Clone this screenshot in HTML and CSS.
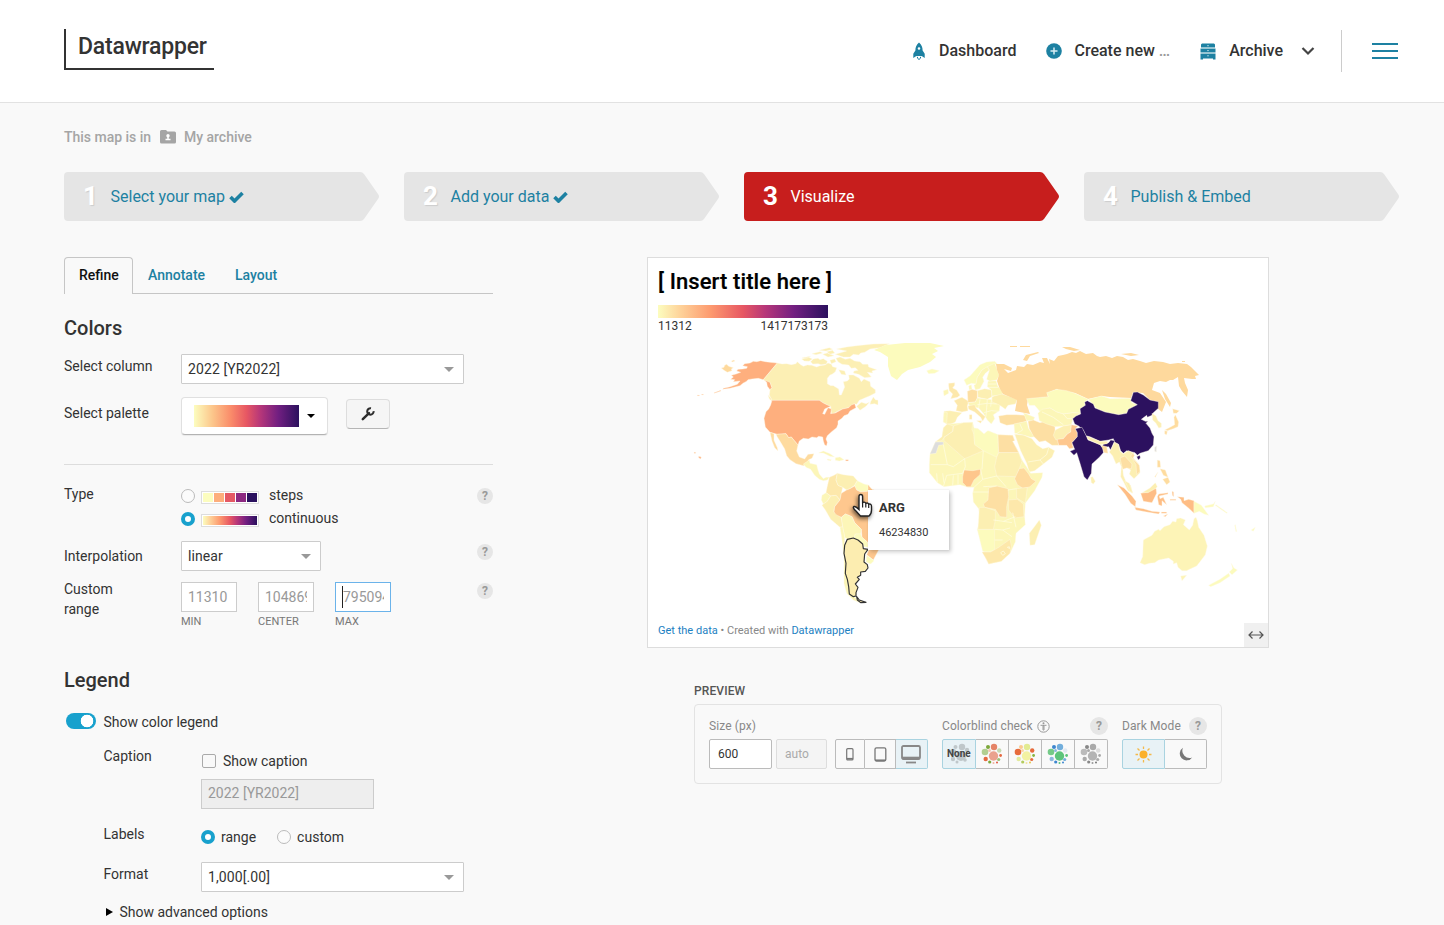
FILE: index.html
```html
<!DOCTYPE html>
<html lang="en">
<head>
<meta charset="utf-8">
<title>Datawrapper</title>
<link rel="stylesheet" href="styles.css">
</head>
<body>
<header class="topbar">
  <div class="logo">Datawrapper</div>
  <nav class="nav">
    <a class="nav-item dash"><svg width="14" height="20" viewBox="0 0 14 20"><path fill="#1d81a2" fill-rule="evenodd" d="M7 1.500C4.400 3.700 3.300 6.500 3.400 9.500L1.300 12.800V17L4.300 15H9.700L12.700 17V12.800L10.600 9.500C10.700 6.500 9.600 3.700 7 1.500ZM7 6.200a1.300 1.300 0 1 1 0 2.600a1.300 1.300 0 0 1 0-2.600Z"/><path d="M5.300 15.800Q5.300 17.800 7 18.500Q8.700 17.800 8.700 15.800" fill="none" stroke="#1d81a2"/></svg>Dashboard</a>
    <a class="nav-item create"><svg width="16" height="16" viewBox="0 0 16 16"><circle cx="8" cy="8" r="7.800" fill="#1d81a2"/><path d="M4.500 8h7M8 4.500v7" stroke="#d7edf4" stroke-width="1.500"/></svg><span>Create new <span class="dots">…</span></span></a>
    <a class="nav-item archive"><svg width="16" height="17" viewBox="0 0 16 17"><path fill="#1d81a2" d="M2 .6h12l1 1V4.600H1V1.600zM.5 5.600h15v4H.5zM.5 10.600h15v5.800H13v-.9H3v.9H.5z"/><path d="M1 5.100h14M1 10.100h14" stroke="#a5ced9" stroke-width=".8"/><path d="M7.300 2.700h1.400M7.300 7.600h1.400M7.300 12.800h1.400" stroke="#cde5ec"/></svg>Archive<svg class="chev" width="14" height="10" viewBox="0 0 14 10"><path d="M1.500 2L7 7.500L12.500 2" fill="none" stroke="#444" stroke-width="2.200"/></svg></a>
    <span class="nav-rule"></span>
    <span class="burger"><i></i><i></i><i></i></span>
  </nav>
</header>
<main class="page">
  <div class="crumb"><span>This map is in</span><svg width="16" height="14" viewBox="0 0 16 14"><path fill="#a5a5a5" d="M1.500 0H6l1.500 1.500h7Q16 1.500 16 3v9q0 1.500-1.500 1.500h-13Q0 13.500 0 12V1.500Q0 0 1.500 0Z"/><circle cx="8" cy="5.700" r="1.700" fill="#fff"/><path d="M8 6v3M5.500 9.500h5" stroke="#fff" stroke-width="1.500"/></svg><span>My archive</span></div>

  <div class="steps">
    <div class="step"><svg class="shape" viewBox="0 0 315 49"><path d="M4 0H296Q298.500 0 300 2L314 22Q316 24.500 314 27L300 47Q298.500 49 296 49H4Q0 49 0 45V4Q0 0 4 0Z"/></svg><b>1</b><span>Select your map</span><svg class="tick" viewBox="0 0 15 12"><path d="M1.500 6L5.500 10L13.500 2" /></svg></div>
    <div class="step"><svg class="shape" viewBox="0 0 315 49"><path d="M4 0H296Q298.500 0 300 2L314 22Q316 24.500 314 27L300 47Q298.500 49 296 49H4Q0 49 0 45V4Q0 0 4 0Z"/></svg><b>2</b><span>Add your data</span><svg class="tick" viewBox="0 0 15 12"><path d="M1.500 6L5.500 10L13.500 2" /></svg></div>
    <div class="step on"><svg class="shape" viewBox="0 0 315 49"><path d="M4 0H296Q298.500 0 300 2L314 22Q316 24.500 314 27L300 47Q298.500 49 296 49H4Q0 49 0 45V4Q0 0 4 0Z"/></svg><b>3</b><span>Visualize</span></div>
    <div class="step"><svg class="shape" viewBox="0 0 315 49"><path d="M4 0H296Q298.500 0 300 2L314 22Q316 24.500 314 27L300 47Q298.500 49 296 49H4Q0 49 0 45V4Q0 0 4 0Z"/></svg><b>4</b><span>Publish &amp; Embed</span></div>
  </div>

  <div class="columns">
    <section class="panel">
      <div class="tabs"><a class="tab active">Refine</a><a class="tab">Annotate</a><a class="tab last">Layout</a></div>
      <h3 class="h-colors">Colors</h3>
      <div class="row r-column"><label>Select column</label><div class="select w283">2022 [YR2022]<i class="caret"></i></div></div>
      <div class="row r-palette"><label>Select palette</label><div class="palette"><span class="magma"></span><i class="caret dark"></i></div>
        <div class="wrench"><svg width="14" height="14" viewBox="0 0 14 14"><path d="M1.800 12.200L8 6.200" stroke="#2d2d2d" stroke-width="2.500" stroke-linecap="round"/><path d="M12.600 4.200A3.200 3.200 0 1 1 10 1.300" fill="none" stroke="#2d2d2d" stroke-width="2"/></svg></div></div>
      <div class="row r-type"><label>Type</label>
        <div class="types">
          <div class="type"><i class="radio"></i><span class="swatch"><i class="c1"></i><i class="c2"></i><i class="c3"></i><i class="c4"></i><i class="c5"></i></span><span class="txt">steps</span></div>
          <div class="type"><i class="radio on"></i><span class="swatch"><i class="magma2"></i></span><span class="txt">continuous</span></div>
        </div><span class="help">?</span></div>
      <div class="row r-interp"><label>Interpolation</label><div class="select w140">linear<i class="caret"></i></div><span class="help">?</span></div>
      <div class="row r-range"><label>Custom<br>range</label>
        <div class="ranges"><div><div class="num"><span>11310</span></div><small>MIN</small></div><div><div class="num"><span>104869</span></div><small>CENTER</small></div><div><div class="num focus"><span>795094</span></div><small>MAX</small></div></div><span class="help">?</span></div>
      <h3 class="h-legend">Legend</h3>
      <div class="toggle-row"><i class="toggle"></i>Show color legend</div>
      <div class="sub">
        <div class="row r-caption"><label>Caption</label><div><div class="check"><i class="box"></i>Show caption</div><div class="field">2022 [YR2022]</div></div></div>
        <div class="row r-labels"><label>Labels</label><div class="opts"><i class="radio on"></i><span>range</span><i class="radio second"></i><span>custom</span></div></div>
        <div class="row r-format"><label>Format</label><div class="select w263">1,000[.00]<i class="caret"></i></div></div>
        <div class="advanced"><i></i>Show advanced options</div>
      </div>
    </section>

    <section class="stage">
      <div class="chart">
        <h1>[ Insert title here ]</h1>
        <div class="legend"><div class="magma2"></div><div class="ends"><span>11312</span><span>1417173173</span></div></div>
        <svg class="map" viewBox="648 334 620 284" width="620" height="284">
          <!-- North America -->
          <g class="land" transform="translate(690 335) scale(.33333)">
            <path class="us" d="M262 84L240 82 226 80 212 77 200 80 190 79 180 84 164 86 158 92 172 95 170 100 158 102 144 103 140 108 152 112 138 117 124 121 130 126 122 133 134 134 130 140 150 138 142 148 118 156 100 160 98 163 120 160 150 152 160 144 168 140 174 134 186 132 205 130 220 134ZM222 134L230 136 240 140 246 158 240 164 232 154 230 142ZM72 173l20-7 1 2-20 7ZM22 180h6v2h-6ZM35 178h5v2h-5Z"/>
            <path class="ru" d="M94 99L102 97 104 91 110 88 116 94 130 98 124 102 126 107 112 112 102 106ZM124 78l8-3 3 3-8 3Z"/>
            <path class="ca" d="M262 84L276 87 290 86 304 89 318 86 322 80 330 88 340 94 352 90 365 91 380 96 390 92 405 90 414 84 424 88 428 95 440 98 436 110 426 118 420 120 412 130 412 146 422 152 430 152 446 162 448 180 454 180 460 166 464 156 460 140 472 138 478 132 476 120 490 120 508 130 514 140 522 132 534 138 540 140 542 154 556 164 556 174 540 182 522 190 508 196 500 208 494 206 488 210 476 218 458 222 440 230 428 238 424 236 422 214 412 210 400 204 388 196 246 196 238 180 240 164 246 158 240 142 220 134Z"/>
            <path class="ca" d="M542 200l8-14 6 8 8 2v14l-10-4-14 2ZM500 214l14-12 14 4 10-4-10 12-18 12ZM234 180l8 8 6 12-10-8ZM335 72l20-6 12 6-10 7-14-1ZM362 80l8-8 14-2 6 4 10-3 12 8-3 8-16 2-8-3-17 1ZM398 58l14-4 20 8-18 4ZM420 76l14-4 4 8-14 6ZM438 70l12-4 16 7 14-3 14 8 16 2 8 8 16 0 2 8 24 8-14 4 2 6-16-2 12 14-20 2-18-10-16-4 2-6 12-2-8-8-12 2-8-10-20-2-12-8ZM336 68l26-4-12 6ZM366 56l24-6 8 4-20 5ZM388 46l30-8 10 5-20 5ZM436 58L470 48 440 42 470 36 500 32 550 27 598 26 570 38 540 42 524 52 512 54 506 60 490 58 480 66 460 66ZM446 104l18 4 4 12-14-2ZM410 50l18-4 6 8-14 4Z"/>
            <path class="us" d="M246 196H388L400 204 412 210 422 214 404 222 398 236 404 238 414 218 424 222 422 236 436 234 458 222 476 218 484 210 494 206 498 218 480 228 474 238 462 242 456 250 444 258 444 268 440 278 425 290 412 302 408 312 412 322 410 332 404 330 400 318 398 306 386 304 380 308 366 306 355 312 340 310 328 318 324 330 312 316 304 306 296 308 288 296 262 298 240 292 226 276 222 250 228 230 236 222 242 210ZM26 364l8 2-2 6-6-4ZM12 352h5v3h-5ZM467 374h8v4h-8Z"/>
            <path class="mx" d="M258 298L288 296 296 308 304 306 312 316 324 330 320 348 328 366 344 372 354 358 372 356 366 370 356 374 350 388 340 392 318 386 300 374 290 362 284 342 272 322 262 306ZM240 292L252 296 252 316 262 338 264 348 254 338 246 318Z"/>
            <path class="l2" d="M386 354L400 348 420 356 434 366 420 364 400 354ZM436 368l14-2 12 8-14 4-12-2ZM412 372l12 2-2 3-10-2Z"/>
          </g>
          <path class="l1" d="M874 350L886 345 905 343 930 343 944 346 934 348 938 351 932 354 936 357 930 362 920 367 908 370 902 374 897 380 891 376 888 366 888 357 880 352Z"/>
          <!-- South America -->
          <g class="land" transform="translate(740 430) scale(.33333)">
            <path class="l2" d="M190 102L208 90 210 100 230 104 234 120 238 132 250 146 258 142 268 142 262 150 250 152 238 148 224 136 212 118 198 112Z"/>
            <path class="l4" d="M268 142L282 136 292 130 288 150 294 166 308 172 304 190 300 210 288 196 272 198 258 188 262 168Z"/>
            <path class="l3" d="M292 130L310 134 340 138 352 152 344 166 330 176 320 180 308 172 294 166 288 150Z"/>
            <path class="l1" d="M352 152L372 162 388 166 384 184 362 186 348 178 344 166Z"/>
            <path class="l2" d="M246 196L258 188 272 198 262 214 250 222 244 210Z"/>
            <path class="l3" d="M250 222L262 214 272 198 288 196 300 210 284 230 282 246 304 262 308 290 300 292 272 268 256 240 246 226Z"/>
            <path class="br" d="M300 210L304 190 320 180 330 176 344 168 350 180 362 186 384 184 384 164 396 178 420 186 440 200 450 230 440 300 418 356 400 390 380 374 388 356 382 336 366 322 364 298 344 278 336 260 316 252 304 262 288 254 282 246 284 230Z"/>
            <path class="l2" d="M304 262L316 252 336 260 344 278 364 298 362 312 346 312 342 324 322 328 314 322 308 290Z"/>
            <path class="l1" d="M346 312L362 312 366 322 382 336 386 352 372 350 368 340 342 326ZM380 376L402 392 392 402 378 396Z"/>
            <path class="l2" d="M300 292L308 290 314 322 314 360 318 400 322 450 328 484 344 500 360 518 340 510 320 490 312 460 312 380 306 330Z"/>
            <path class="arg" d="M322 328L340 324 354 330 368 342 370 356 384 358 374 372 372 396 382 404 384 414 376 424 362 426 362 436 352 442 358 448 346 462 354 472 348 488 348 498 340 500 328 492 326 470 322 448 316 430 318 400 312 370 314 346ZM350 500L358 510 378 517 362 518 352 510Z"/>
          </g>
          <!-- Europe and Africa -->
          <g class="land" transform="translate(900 320) scale(.33333)">
            <path class="l1" d="M80 152L96 147 118 152 104 160 86 161ZM192 180L210 168 226 150 240 134 260 126 284 124 292 132 270 138 246 150 232 172 228 192 214 190 200 196Z"/>
            <path class="l2" d="M228 192L232 172 246 150 262 140 268 150 256 160 248 172 252 184 240 206 226 210 222 196ZM262 140L284 130 292 150 298 166 290 180 270 184 260 178 264 164 268 152ZM206 198l8-4 2 14-8 2ZM130 212L144 208 146 220 132 228Z"/>
            <path class="l4" d="M146 190L164 188 164 196 158 204 170 210 180 226 172 232 152 236 158 222 148 212 146 198ZM162 242L180 234 186 232 206 244 202 258 204 272 186 276 168 272 172 256Z"/>
            <path class="l3" d="M132 274L150 272 186 278 172 292 166 306 150 314 140 312 130 306Z"/>
            <path class="l2" d="M132 276L142 278 140 310 130 306Z"/>
            <path class="l5" d="M202 214L216 208 232 212 232 234 226 246 204 248Z"/>
            <path class="l3" d="M232 212L254 206 274 210 276 230 262 238 234 232Z"/>
            <path class="l2" d="M204 248L226 246 232 234 262 238 290 240 300 256 298 272 280 284 284 296 274 312 262 300 250 280 236 264 210 260Z"/>
            <path class="l4" d="M204 258L224 254 228 264 244 280 256 290 248 304 242 292 224 276 206 268ZM230 302h16l-4 8ZM208 284h8v14h-8Z"/>
            <path class="l2" d="M264 184L288 182 294 200 310 214 306 226 276 228 274 210 262 200Z"/>
            <path class="l3" d="M276 230L306 222 330 230 352 238 346 252 324 256 316 268 306 260 296 254 276 246Z"/>
            <path class="rule" d="M232 254L262 250 290 252M240 238L236 264M262 238L258 290M276 228L272 260M264 192H290M264 202H294M252 278L274 272 298 274"/>
            <path class="l5" d="M296 288L320 284 350 284 376 286 380 304 350 312 320 316 300 308Z"/>
            <path class="l2" d="M370 278L404 292 400 302 380 302ZM342 312L380 304 386 326 404 350 392 352 372 346 344 340Z"/>
            <path class="l5" d="M384 304L400 300 420 308 440 302 464 312 466 340 474 358 476 376 456 376 436 362 418 366 400 348 388 326Z"/>
            <path class="l3" d="M344 342L372 346 396 356 410 374 428 386 446 382 464 392 456 412 430 432 404 452 388 456 380 430 362 392Z"/>
            <path class="rule" d="M384 426L420 420 440 404 446 384M360 312L368 330 344 344M420 420L430 432"/>
            <path class="l2" d="M142 312L190 308 218 306 222 324 234 326 252 342 264 332 294 344 338 346 344 360 336 362 352 388 366 420 382 444 392 460 428 458 426 472 404 512 376 550 374 590 376 614 348 640 346 666 330 700 304 724 266 732 258 716 246 680 232 628 240 600 236 566 220 546 218 520 222 502 204 502 180 494 132 500 112 488 88 458 88 432 90 402 106 366 126 352 130 324Z"/>
            <path class="l3" d="M142 312L160 318 158 334 132 352 126 362 106 366 126 350 130 324ZM160 318L190 308 218 308 216 328 222 344 224 372 250 392 194 416 132 362 132 352 158 334Z"/>
            <path class="l1" d="M222 324L234 326 252 342 264 332 294 344 296 398 290 412 250 392 224 374 222 344ZM232 628H284V690L266 696 248 694Z"/>
            <path class="l5" d="M294 344L338 346 344 362 338 364 356 398H296Z"/>
            <path class="l3" d="M296 398H356L366 424 356 452 350 470 290 468 284 440 290 412Z"/>
            <path class="et" d="M344 476L358 446 372 444 386 462 394 476 408 484 390 500 370 506 352 494Z"/>
            <path class="ng" d="M188 470L192 450 218 452 242 448 240 464 222 480 212 500 200 500 188 488Z"/>
            <path class="l5" d="M266 504L290 498 324 506 326 530 320 560 320 592 300 590 286 568 254 562 250 552 264 540Z"/>
            <path class="l4" d="M326 540L352 538 370 552 372 590 344 594 326 570ZM246 696L272 696 296 682 330 658 334 678 330 700 304 724 266 732 258 716Z"/>
            <path class="l3" d="M350 506L382 502 376 550 350 534ZM238 562L254 562 286 572 286 600 280 628H234ZM388 640L402 622 418 600 424 616 404 674 390 676Z"/>
            <path class="wsa" d="M90 402L106 366 130 366 130 374 116 376 108 400Z"/>
            <path class="rule" d="M130 374L142 434 92 434M142 434L160 440 194 416 196 440 188 460 140 466 130 500M250 392L246 448M110 460L112 488M128 460L132 488M160 466L158 496M174 464V494M242 448L248 478 222 502M248 478L290 468M250 500L290 498M218 516H266M280 600L310 604 346 590M310 604L336 608M284 628L308 630 330 624M308 630L336 650M284 660L308 660M324 510L350 506M338 578L348 622M290 468L318 500M302 698l8-5 6 8-8 5ZM322 682l6-2 1 6Z"/>
          </g>
          <!-- Asia and Oceania -->
          <path class="ru" d="M996 364L1004 364 1012 368 1011 371 1004 369 1008 373 1016 370 1017 366 1024 367 1027 364 1033 365 1040 362 1044 363 1042 358 1047 358 1050 364 1049 359 1054 361 1058 356 1063 355 1067 354 1072 352 1076 353 1080 351 1086 354 1093 353 1097 356 1100 357 1106 356 1112 358 1117 356 1123 357 1128 360 1133 359 1140 361 1146 363 1154 361 1163 362 1170 364 1178 363 1187 364 1191 367 1195 371 1199 375 1195 376 1196 379 1192 379 1184 378 1185 383 1188 390 1187 397 1182 391 1179 386 1178 377 1173 380 1170 380 1166 382 1160 381 1154 383 1152 390 1160 393 1166 402 1162 412 1157 408 1158 402 1150 400 1143 393 1133 392 1131 398 1110 397 1102 396 1088 399 1075 393 1060 391 1057 389 1047 393 1048 397 1028 399 1027 405 1030 414 1015 411 1017 400 1003 394 999 387 997 381 999 375 997 370ZM1023 360L1026 355 1038 352 1039 353 1030 356 1027 361ZM1062 347h8l10 3-6 1-8-2ZM1121 354l10-1 8 2-8 1ZM1010 346h7v1h-7ZM1020 346h10v1h-10ZM1182 361h3v1h-3ZM1162 390L1166 394 1171 403 1170 407 1165 399Z"/>
          <g class="land" transform="translate(1060 330) scale(.33333)">
            <path class="l1" d="M-100 206L-35 200-40 188-10 178 20 182 45 190 85 208 74 216 76 226 60 236 62 250 40 248 10 252-10 246-30 234-46 240-54 250-64 240-76 226-92 226Z"/>
            <path class="l2" d="M-66 250L-54 238-30 234-10 246 10 252 40 248 62 250 48 258 38 268 34 284 10 288-14 290-40 282-62 272Z"/>
            <path class="rule" d="M-54 246L-20 262 10 284M10 252L22 266 40 266"/>
            <path class="l3" d="M-14 300L10 288 34 284 32 306 22 312 10 326-12 330-20 316Z"/>
            <path class="br" d="M34 284L54 288 46 296 52 308 52 320 36 338 40 354 28 356 20 346-4 346-8 328 10 326 22 312 32 306Z"/>
            <path class="l1" d="M85 208L125 198 150 206 212 205 215 218 232 224 205 238 200 250 176 254 140 248 110 236Z"/>
            <path class="cn" d="M82 212L100 222 105 234 135 246 176 254 200 250 205 238 232 224 212 212 220 187 232 186 250 195 270 210 295 215 295 235 280 248 276 256 262 262 260 256 244 268 256 274 264 274 258 280 270 294 276 310 282 320 280 345 265 362 240 370 232 376 225 368 200 362 190 370 182 362 175 342 164 338 160 326 146 330 120 334 90 320 78 318 70 300 56 288 44 282 38 266 48 258 62 252 60 236 76 226 74 216ZM230 380l10-4 1 8-6 6Z"/>
            <path class="cn" d="M46 296L66 292 72 304 80 320 84 330 120 344 126 352 130 342 146 338 152 330 164 332 158 346 152 360 146 350 130 352 130 368 118 382 96 402 94 430 82 450 72 440 60 400 50 368 42 376 30 364 44 358 36 338 52 320 52 308Z"/>
            <path class="l3" d="M80 318L120 334 142 334 142 341 120 344 84 328ZM92 442l6-2 8 14-6 8-6-4Z"/>
            <path class="et" d="M124 346l16 4 4 20-12-2Z"/>
            <path class="l3" d="M152 360L164 336 176 344 180 364 190 372 205 362 222 370 218 382 236 402 240 428 222 446 208 432 212 420 200 412 188 412 190 436 200 460 212 466 218 490 204 482 192 458 182 440 184 410 178 396 168 402 158 378 148 366Z"/>
            <path class="l5" d="M180 384l14-6 22 24-2 14-14-2-12 4ZM218 370l6 6-6 10 20 20 2 18-10 10-2-30-16-26Z"/>
            <path class="l3" d="M276 250L288 258 294 272 304 280 304 292 296 294 288 280 278 270Z"/>
            <path class="jp" d="M338 236L358 242 350 250 340 250ZM346 254L356 276 354 290 340 296 322 302 314 300 330 292 344 284 342 262ZM314 302l8 2-2 10-6-2ZM292 390l8 2 2 20-10 0ZM300 416l16 4 8 22-14-6ZM308 448l16-6 6 14-10 8ZM284 440l10-14-8 16Z"/>
            <path class="id" d="M172 464L192 474 216 498 228 514 226 530 212 520 196 494ZM224 532L250 536 276 544 300 546 296 552 260 546 228 540ZM242 490L264 486 280 476 288 474 290 490 276 518 250 514ZM292 500l4-8 28-4 0 4-26 6 2 8 10-4 10 22-14-12 0 16-10-4ZM352 500L372 502 372 512 386 508 402 512 402 550 388 536 366 518 362 508ZM304 546h16v4h-16ZM336 484l5 2 0 14-4-4ZM330 508h18v3h-18ZM310 558l14-6-8 8Z"/>
            <path class="l3" d="M246 488L270 474 286 458 292 470 286 476 264 488ZM194 452l14 8 10 28-8-4Z"/>
            <path class="l1" d="M402 514L424 526 446 556 432 552 418 544 402 550ZM434 528l26-6 6-8-6 16-24 3ZM468 524l34 24-2 2-34-24ZM526 584l4 20-2 2-4-20ZM574 600l12-8-6 12ZM514 700L522 714 532 720 516 734 508 726 518 716ZM506 730L510 738 480 758 452 770 446 766 480 748Z"/>
            <path class="wsa" d="M284 352l6-4-1 18-5-2Z"/>
            <path class="au" d="M250 630L276 616 284 604 296 598 300 602 312 590 330 584 338 574 348 576 350 566 362 564 376 570 370 584 388 600 398 586 402 566 408 562 412 572 416 592 432 616 442 648 436 674 424 690 410 708 392 716 380 722 366 722 354 712 350 698 340 702 340 694 326 684 296 690 284 698 268 700 254 704 240 698 248 680ZM362 738l18-2-14 16Z"/>
          </g>
        </svg>
        <div class="foot"><a>Get the data</a> • Created with <a>Datawrapper</a></div>
        <div class="tip"><b>ARG</b><span>46234830</span></div>
        <svg class="hand" width="26" height="32" viewBox="0 0 26 32"><path d="M7 3.500Q7 1.500 8.800 1.500T10.600 3.500V9.500Q13 8.500 13.800 10.300Q16 9.400 16.700 11.200Q19.500 10.500 19.500 13.500V17Q19.500 21 17 23H8.500L4 18Q0 14.500 2 13.500Q3.500 13 7 16.500Z" fill="#fff" stroke="#222" stroke-width="1.400"/><path d="M10.600 9.500v5M13.800 10.500v4M16.700 11.500v3.500" stroke="#222" stroke-width="1.200"/></svg>
        <div class="resize"><svg width="16" height="10" viewBox="0 0 16 10"><path d="M1 5H15M4.500 1.500L1 5L4.500 8.500M11.500 1.500L15 5L11.500 8.500" fill="none" stroke="#555" stroke-width="1.200"/></svg></div>
      </div>

      <div class="preview">
        <h4>PREVIEW</h4>
        <div class="tools">
          <div class="group size"><div class="cap">Size (px)</div><div class="line"><span class="inp">600</span><span class="inp off">auto</span>
            <div class="seg dev"><span><svg width="8" height="13" viewBox="0 0 8 13"><rect x=".7" y=".7" width="6.300" height="11.300" rx="1" fill="none" stroke="#777" stroke-width="1.200"/><path d="M1 10.800h6" stroke="#777" stroke-width="1.800"/></svg></span><span><svg width="13" height="15" viewBox="0 0 13 15"><rect x="1" y=".8" width="10.800" height="13.200" rx="1.500" fill="none" stroke="#777" stroke-width="1.300"/><path d="M1 13.200h11" stroke="#777" stroke-width="1.500"/></svg></span><span class="on"><svg width="20" height="19" viewBox="0 0 20 19"><rect x="1" y="1" width="18" height="13" rx="1.500" fill="none" stroke="#888" stroke-width="1.800"/><path d="M1 13h18" stroke="#888" stroke-width="2.600"/><path d="M5 17.500h10" stroke="#888" stroke-width="1.800"/></svg></span></div></div></div>
          <div class="group cb"><div class="cap">Colorblind check <svg width="13" height="13" viewBox="0 0 13 13"><circle cx="6.500" cy="6.500" r="5.700" fill="none" stroke="#999"/><circle cx="6.500" cy="3.300" r="1" fill="#999"/><path d="M3.500 5.300h6M6.500 5v5.500" stroke="#999"/><path d="M6.500 6v4" stroke="#aaa" stroke-width="2.200"/></svg><i class="q">?</i></div>
            <div class="seg eyes">
              <span class="on"><svg viewBox="0 0 22 22" fill="#bfc7ca"><circle cx="14" cy="4" r="3.200"/><circle cx="5" cy="9" r="3.200"/><circle cx="13" cy="13" r="5"/><circle cx="7.500" cy="4" r="2"/><circle cx="19" cy="7" r="2.200"/><circle cx="5" cy="16" r="2.200"/><circle cx="9" cy="19" r="1.500"/><circle cx="17" cy="17" r="1.800"/></svg><b>None</b></span>
              <span><svg viewBox="0 0 22 22"><circle cx="13" cy="4" r="3.200" fill="#e58467"/><circle cx="4" cy="9" r="3.300" fill="#b2ce91"/><circle cx="12.500" cy="13" r="4.700" fill="#eaa18d"/><circle cx="7" cy="4" r="2" fill="#7da83a"/><circle cx="18.200" cy="7.500" r="2.200" fill="#c5d9b0"/><circle cx="4.700" cy="16" r="2.200" fill="#e46840"/><circle cx="8.700" cy="19" r="1.600" fill="#7da83a"/><circle cx="17.700" cy="16.500" r="1.600" fill="#9ac075"/><circle cx="19.600" cy="12.500" r="1.400" fill="#e46840"/><circle cx="12.500" cy="20" r="1" fill="#f2b39f"/><circle cx="16" cy="19.500" r="1" fill="#df5740"/><circle cx="8.500" cy="7.500" r="1.500" fill="#f3c4b4"/></svg></span>
              <span><svg viewBox="0 0 22 22"><circle cx="13" cy="4" r="3.200" fill="#e2eb92"/><circle cx="4" cy="9" r="3.300" fill="#e76b3c"/><circle cx="12.500" cy="13" r="4.700" fill="#f3f2a2"/><circle cx="7" cy="4" r="2" fill="#fbcb90"/><circle cx="18.200" cy="7.500" r="2.200" fill="#e76b3c"/><circle cx="4.700" cy="16" r="2.200" fill="#e2ea9c"/><circle cx="8.700" cy="19" r="1.600" fill="#b3cc5d"/><circle cx="17.700" cy="16.500" r="1.600" fill="#e76b3c"/><circle cx="19.600" cy="12.500" r="1.400" fill="#85b440"/><circle cx="12.500" cy="20" r="1" fill="#f2e39f"/><circle cx="16" cy="19.500" r="1" fill="#e3c84d"/><circle cx="8.500" cy="7.500" r="1.500" fill="#fad7a4"/></svg></span>
              <span><svg viewBox="0 0 22 22"><circle cx="13" cy="4" r="3.200" fill="#72aedc"/><circle cx="4" cy="9" r="3.300" fill="#74ca88"/><circle cx="12.500" cy="13" r="4.700" fill="#5cc47b"/><circle cx="7" cy="4" r="2" fill="#3d87cf"/><circle cx="18.200" cy="7.500" r="2.200" fill="#e0e8f0"/><circle cx="4.700" cy="16" r="2.200" fill="#8db9df"/><circle cx="8.700" cy="19" r="1.600" fill="#3d87cf"/><circle cx="17.700" cy="16.500" r="1.600" fill="#72aedc"/><circle cx="19.600" cy="12.500" r="1.400" fill="#5cc47b"/><circle cx="12.500" cy="20" r="1" fill="#5cc47b"/><circle cx="16" cy="19.500" r="1" fill="#3d87cf"/><circle cx="8.500" cy="7.500" r="1.500" fill="#8db9df"/></svg></span>
              <span><svg viewBox="0 0 22 22" fill="#aaa"><circle cx="13" cy="4" r="3.200"/><circle cx="4" cy="9" r="3.300" fill="#bbb"/><circle cx="12.500" cy="13" r="4.700" fill="#b4b4b4"/><circle cx="7" cy="4" r="2" fill="#888"/><circle cx="18.200" cy="7.500" r="2.200" fill="#ddd"/><circle cx="4.700" cy="16" r="2.200"/><circle cx="8.700" cy="19" r="1.600" fill="#888"/><circle cx="17.700" cy="16.500" r="1.600"/><circle cx="19.600" cy="12.500" r="1.400"/><circle cx="12.500" cy="20" r="1" fill="#999"/><circle cx="16" cy="19.500" r="1" fill="#777"/><circle cx="8.500" cy="7.500" r="1.500"/></svg></span>
            </div></div>
          <div class="group dm"><div class="cap">Dark Mode<i class="q">?</i></div>
            <div class="seg mode"><span class="on"><svg width="17" height="17" viewBox="0 0 17 17"><circle cx="8.500" cy="8.500" r="4" fill="#fbb12b"/><path d="M8.500 .5v2.500M8.500 14v2.500M.5 8.500h2.500M14 8.500h2.500M2.500 2.500l2 2M12.500 12.500l2 2M14.500 2.500l-2 2M2.500 14.500l2-2" stroke="#f4b94a" stroke-width="1.300"/></svg></span><span><svg width="15" height="15" viewBox="0 0 15 15"><path d="M5 .8A6.800 6.800 0 1 0 14.200 10.400A7.200 7.200 0 0 1 5 .8Z" fill="#777"/></svg></span></div></div>
        </div>
      </div>
    </section>
  </div>
</main>
</body>
</html>
```
FILE: styles.css
```css
* { box-sizing: border-box; }
body { margin: 0; width: 1444px; height: 925px; overflow: hidden; background: #f9f9f9; color: #333; font: 14px/20px Roboto, "Liberation Sans", sans-serif; letter-spacing: 0; }
svg { display: block; flex: none; }
h1, h3, h4 { margin: 0; }
i { font-style: normal; }

.topbar { height: 103px; background: #fff; border-bottom: 1px solid #e2e2e2; display: flex; justify-content: space-between; padding: 29px 46px 0 64px; }
.logo { width: 150px; height: 41px; border-left: 2px solid #333; border-bottom: 2px solid #333; padding: 3px 0 0 12px; font-size: 23px; line-height: 30px; font-weight: 500; letter-spacing: -.2px; }
.nav { display: flex; height: 44px; align-items: center; font-size: 16px; font-weight: 500; }
.nav-item { display: flex; align-items: center; }
.dash svg { margin-right: 13px; }
.create { margin-left: 30px; }
.create svg { margin-right: 12px; }
.dots { color: #999; }
.archive { margin-left: 30px; }
.archive > svg:first-child { margin-right: 13px; }
.archive .chev { margin-left: 18px; }
.nav-rule { width: 1px; height: 42px; background: #ccc; margin: 0 30px 0 26px; }
.burger { display: grid; gap: 5px; width: 26px; }
.burger i { height: 2px; background: #1d81a2; }

.page { padding: 24px 45px 0 64px; }
.crumb { display: flex; align-items: center; height: 20px; color: #a5a5a5; font-weight: 500; letter-spacing: -.02px; }
.crumb svg { margin: 0 8px 0 9px; }
.steps { display: flex; gap: 25px; margin-top: 25px; }
.step { width: 315px; height: 49px; position: relative; display: flex; align-items: center; padding-left: 19px; font-size: 16px; color: #1d81a2; }
.step .shape { position: absolute; inset: 0; width: 315px; height: 49px; fill: #e5e5e5; }
.step b { position: relative; width: 27.5px; top: -1px; font-size: 26px; color: #fff; text-shadow: 1px 1px 1px #ccc; }
.step span { position: relative; }
.step .tick { position: relative; width: 15px; height: 12px; margin-left: 4px; fill: none; stroke: #1d81a2; stroke-width: 3.6; }
.step.on { color: #fff; }
.step.on .shape { fill: #c71e1d; }
.step.on b { text-shadow: none; }

.columns { display: flex; margin-top: 36px; }
.panel { width: 429px; }
.tabs { display: flex; height: 37px; border-bottom: 1px solid #c6c6c6; font-weight: 500; }
.tab { color: #1d81a2; padding: 8px 15px 0; }
.tab.active { height: 37px; width: 69px; padding: 7px 0 0 14px; border: 1px solid #c6c6c6; border-bottom: 0; border-radius: 4px 4px 0 0; background: #f9f9f9; color: #111; }
h3 { font-size: 20px; line-height: 24px; font-weight: 500; }
.h-colors { margin-top: 22px; }
.row { display: flex; align-items: flex-start; }
.row > label { width: 117px; flex: none; }
.select { height: 30px; background: #fff; border: 1px solid #ccc; border-radius: 1px; display: flex; align-items: center; justify-content: space-between; padding: 0 9px 0 6px; letter-spacing: .1px; }
.w283 { width: 283px; } .w140 { width: 140px; } .w263 { width: 263px; }
.caret { border: 5px solid transparent; border-top-color: #999; border-bottom: 0; }
.caret.dark { border-top-color: #000; border-width: 4px 4px 0; }
.r-column { margin-top: 14px; height: 43px; }
.r-column label { margin-top: 2px; }
.r-palette { height: 68px; border-bottom: 1px solid #ddd; }
.r-palette label { margin-top: 6px; }
.palette { width: 147px; height: 38px; background: #fff; border: 1px solid #e0e0e0; border-bottom-color: #b3b3b3; border-radius: 4px; box-shadow: 0 1px 1px #0001; padding-left: 12px; display: flex; align-items: center; gap: 8px; }
.magma { width: 105px; height: 22px; background: linear-gradient(90deg, #fcfdbf, #fcc58a 18%, #fa8c6a 35%, #e75763 50%, #b73779 63%, #721f81 80%, #2b115e); }
.wrench { width: 44px; height: 30px; margin: 2px 0 0 18px; background: #f5f5f5; border: 1px solid #ddd; border-bottom-color: #b5b5b5; border-radius: 4px; display: flex; align-items: center; justify-content: center; }
.r-type { padding-top: 19px; height: 76px; }
.types { width: 296px; }
.type { display: flex; align-items: center; height: 23px; }
.type .txt { margin-top: -1px; }
.radio { width: 14px; height: 14px; border: 1px solid #bbb; border-radius: 50%; background: #fbfbfb; flex: none; }
.radio.on { border: 4px solid #18a1cd; background: #fff; }
.swatch { width: 58px; height: 13px; border: 1px solid #ddd; padding: 1px; background: #fff; margin: 4px 10px 0 6px; display: flex; gap: 1px; }
.swatch i { flex: 1; }
.c1 { background: #fcfdbf; } .c2 { background: #fdae7c; } .c3 { background: #e55964; } .c4 { background: #8c2981; } .c5 { background: #2b115e; }
.magma2 { background: linear-gradient(90deg, #fcfdbf, #fed39a 13%, #fd9a6f 31%, #e75763 50%, #b73779 63%, #721f81 80%, #2b115e); }
.help, .q { display: block; border-radius: 50%; background: #e6e6e6; color: #999; text-align: center; font-weight: 700; }
.help { width: 16px; height: 16px; font-size: 12px; line-height: 16px; margin-left: auto; flex: none; }
.r-type .help { margin-top: 4px; }
.r-interp { height: 41px; }
.r-interp label { margin-top: 5px; }
.r-interp .help { margin-top: 3px; }
.r-range { height: 86px; }
.r-range label { margin-top: -3px; }
.r-range .help { margin-top: 1px; }
.ranges { display: flex; gap: 21px; }
.num { width: 56px; height: 30px; border: 1px solid #ccc; background: #fff; color: #999; padding: 3px 6px; }
.num span { display: block; overflow: hidden; line-height: 22px; }
.num.focus { border-color: #6bb3ea; }
.num.focus span { border-left: 1px solid #222; }
small { display: block; font-size: 11px; line-height: 20px; color: #777; }
.h-legend { height: 24px; }
.toggle-row { display: flex; align-items: center; gap: 7.5px; margin: 20px 0 0 2px; height: 20px; }
.toggle { width: 30px; height: 16px; border-radius: 8px; background: radial-gradient(circle at 21px 8px, #fff 6px, #18a1cd 6.6px); margin-top: -2px; }
.sub { margin-left: 39.5px; }
.sub .row > label { width: 97.5px; }
.r-caption { height: 78px; padding-top: 14px; }
.check { display: flex; align-items: center; gap: 7px; height: 20px; margin-top: 5px; }
.box { width: 14px; height: 14px; border: 1px solid #aaa; border-radius: 2px; margin-left: 1px; margin-top: -1px; }
.field { width: 173px; height: 30px; margin-top: 8px; padding: 3px 6px; background: #eee; border: 1px solid #ccc; color: #999; }
.r-labels { height: 52px; padding-top: 14px; }
.opts { display: flex; align-items: center; margin-top: 3px; }
.opts span { margin-left: 6px; }
.opts .second { margin-left: 21px; }
.r-format { height: 40px; }
.r-format label { margin-top: 2px; }
.advanced { display: flex; align-items: center; gap: 7px; padding-left: 2px; }
.advanced i { border: 4px solid transparent; border-left: 7px solid #000; border-right: 0; }

.stage { margin-left: 154px; width: 622px; }
.chart { position: relative; height: 391px; background: #fff; border: 1px solid #ddd; padding-top: 11px; color: #000; }
h1 { font-size: 22px; line-height: 26px; font-weight: 500; letter-spacing: .1px; margin-left: 10px; -webkit-text-stroke: .2px #000; }
.legend { width: 170px; margin: 10px 0 0 10px; height: 29px; color: #333; font-size: 12px; }
.legend .magma2 { height: 13px; }
.ends { display: flex; justify-content: space-between; line-height: 16px; }
.land path { stroke: #fffbe8; stroke-width: 1.2; stroke-linejoin: round; }
.l1 { fill: #fcfbbd; } .l2 { fill: #fcf6b8; } .l3 { fill: #fcefb2; } .l4 { fill: #fde8ab; } .l5 { fill: #fddfa3; }
.us { fill: #feaf7e; } .ca { fill: #fcefb4; } .mx { fill: #fedb9f; } .ru { fill: #fed99d; } .br { fill: #fec78e; }
.et { fill: #fedb9f; } .ng { fill: #fec68c; } .jp { fill: #fedc9f; } .id { fill: #febd85; } .au { fill: #fdf4b7; }
.cn { fill: #2c115f; } .wsa { fill: #ddd; }
.land .arg { fill: #fcedb0; stroke: #333; stroke-width: 3.5; }
.land .rule { fill: none; stroke: #fffde6; stroke-width: 2; }
.foot { margin: 3px 0 0 10px; font-size: 11px; letter-spacing: .01px; color: #888; line-height: 20px; }
.foot a { color: #1d81c2; }
.tip { position: absolute; left: 220px; top: 232px; width: 81px; height: 60px; background: #fff; box-shadow: 2px 2px 4px #0003, 0 0 1px #0002; padding: 8px 11px; color: #333; }
.tip b, .tip span { display: block; font-size: 13px; line-height: 20px; }
.tip span { font-size: 11px; margin-top: 5px; }
.hand { position: absolute; left: 204px; top: 235px; filter: drop-shadow(-1px 2px 2px #0009); }
.resize { position: absolute; right: 0; bottom: 0; width: 24px; height: 24px; background: #f0f0f0; display: flex; align-items: center; justify-content: center; }

.preview { margin: 33px 0 0 47px; width: 528px; }
h4 { font-size: 12px; line-height: 20px; font-weight: 500; letter-spacing: .1px; color: #555; }
.tools { margin-top: 3px; height: 80px; border: 1px solid #e3e3e3; border-radius: 4px; padding: 11px 14px; display: flex; gap: 14px; }
.cap { height: 20px; display: flex; align-items: center; gap: 4px; font-size: 12px; color: #888; letter-spacing: .1px; margin-bottom: 3px; }
.q { width: 18px; height: 18px; line-height: 18px; font-size: 12px; margin-left: auto; }
.line { display: flex; }
.inp { width: 63px; height: 30px; background: #fff; border: 1px solid #bbb; border-radius: 2px; padding: 4px 8px; font-size: 12px; }
.inp.off { width: 51px; margin: 0 8px 0 4px; border-color: #ddd; background: #f4f4f4; color: #aaa; }
.seg { display: flex; height: 30px; }
.seg span { display: flex; align-items: center; justify-content: center; border: 1px solid #bbb; border-left-width: 0; position: relative; }
.seg span:first-child { border-left-width: 1px; border-radius: 2px 0 0 2px; }
.seg span:last-child { border-radius: 0 2px 2px 0; }
.seg .on { background: #e8f2f6; border-color: #a9d3e0; }
.dev span { width: 31px; }
.dev span:first-child { width: 30px; }
.dev span:last-child { width: 32px; padding-right: 2px; }
.group.cb { width: 166px; } .group.dm { width: 85px; }
.eyes span { width: 33px; }
.eyes span:first-child { width: 34px; }
.eyes svg { width: 22px; height: 22px; }
.eyes b { position: absolute; left: 4px; top: 4px; font-size: 10px; color: #444; }
.mode span { width: 42px; }
.mode span:first-child { width: 43px; }
```
